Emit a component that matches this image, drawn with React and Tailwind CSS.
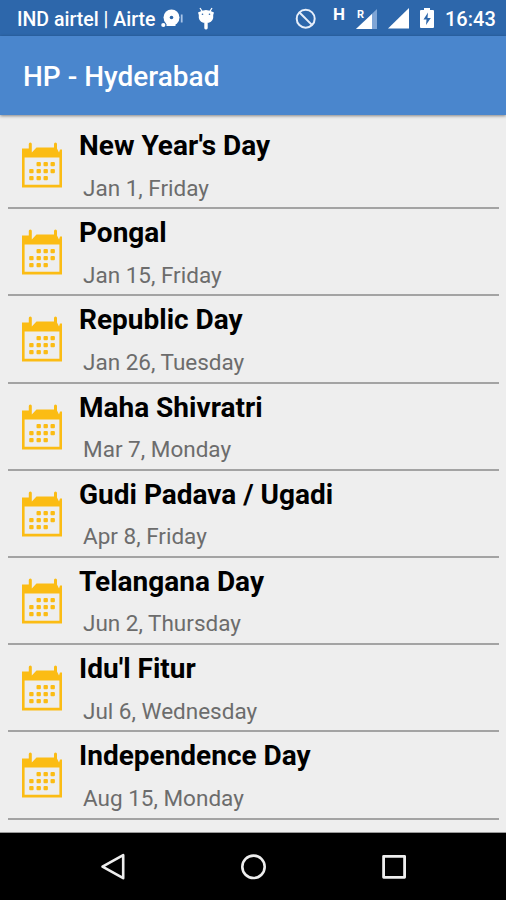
import React from 'react';

const holidays = [
    { name: "New Year's Day", date: 'Jan 1, Friday' },
    { name: 'Pongal', date: 'Jan 15, Friday' },
    { name: 'Republic Day', date: 'Jan 26, Tuesday' },
    { name: 'Maha Shivratri', date: 'Mar 7, Monday' },
    { name: 'Gudi Padava / Ugadi', date: 'Apr 8, Friday' },
    { name: 'Telangana Day', date: 'Jun 2, Thursday' },
    { name: "Idu'l Fitur", date: 'Jul 6, Wednesday' },
    { name: 'Independence Day', date: 'Aug 15, Monday' },
];

const CalendarIcon = () => (
    <svg className="shrink-0" width="40" height="46" viewBox="0 0 40 46" fill="#fbbc14">
        <path d="M0 6.5h6.8V2q0-1.5 1.5-1.5T9.8 2v8.5L14.5 5.5H32V2q0-1.5 1.5-1.5T35 2v4.5l2 4L38 7.5h2V45.5H0zM2.6 15.5v27.2h34.8V15.5z" fillRule="evenodd" />
        <g>
            <rect x="14.5" y="20" width="4.4" height="4.2" rx="1" />
            <rect x="21.5" y="20" width="4.4" height="4.2" rx="1" />
            <rect x="28.5" y="20" width="4.4" height="4.2" rx="1" />
            <rect x="7.2" y="27" width="4.4" height="4.2" rx="1" />
            <rect x="14.5" y="27" width="4.4" height="4.2" rx="1" />
            <rect x="21.5" y="27" width="4.4" height="4.2" rx="1" />
            <rect x="28.5" y="27" width="4.4" height="4.2" rx="1" />
            <rect x="7.2" y="34" width="4.4" height="4.2" rx="1" />
            <rect x="14.5" y="34" width="4.4" height="4.2" rx="1" />
            <rect x="21.5" y="34" width="4.4" height="4.2" rx="1" />
        </g>
    </svg>
);

const DiscIcon = () => (
    <svg width="24" height="20" viewBox="0 0 24 20" fill="#fff">
        <circle cx="10.5" cy="8.5" r="8" />
        <circle cx="10.5" cy="8.5" r="1.8" fill="#2d67ab" />
        <circle cx="2.3" cy="16" r="2.1" />
        <path d="M5.5 14h9v3h-9z" />
        <path d="M20.7 5.5v8" stroke="#a9c5e8" strokeWidth="1.8" />
    </svg>
);

const DroidIcon = () => (
    <svg width="18" height="24" viewBox="0 0 18 24" fill="#fff">
        <path d="M3 1l2.2 3.5M15 1l-2.2 3.5" stroke="#fff" strokeWidth="1.3" />
        <path d="M1 5.5Q5 3 9 3t8 2.5l-.8 2.5v3q-1 5-7.2 5t-7.2-5V8z" />
        <rect x="7.3" y="15" width="3.4" height="7.5" rx="1.4" />
        <circle cx="5.5" cy="7.3" r=".8" fill="#2d67ab" />
        <circle cx="12.5" cy="7.3" r=".8" fill="#2d67ab" />
    </svg>
);

const StatusBar = () => (
    <div className="flex h-9 items-start bg-[#2d67ab] text-white">
        <span className="ml-[17px] mt-[7px] w-[144px] whitespace-nowrap text-[19.5px] font-medium leading-[26px]">IND airtel | Airte</span>
        <div className="mt-[9px]"><DiscIcon /></div>
        <div className="ml-[12px] mt-[7px]"><DroidIcon /></div>
        <svg className="ml-[80px] mt-[8px]" width="22" height="22" viewBox="0 0 22 22" fill="none" stroke="#e6eefa" strokeWidth="2">
            <circle cx="10.7" cy="10.7" r="9" />
            <path d="M4.5 4.5l12.4 12.4" />
        </svg>
        <span className="ml-[16px] mt-[4px] w-[14px] text-[17px] font-bold leading-[20px]">H</span>
        <div className="ml-[9px] mt-[8px] flex">
            <span className="z-10 -mr-[8px] w-[8px] pl-px text-[11px] font-bold leading-[13px]">R</span>
            <svg width="22" height="22" viewBox="0 0 22 22">
                <path d="M21 1v20H0z" fill="#7fa5d6" />
                <path d="M16 6v15H0z" fill="#fff" />
            </svg>
        </div>
        <svg className="ml-[10px] mt-[8px]" width="21" height="21" viewBox="0 0 21 21">
            <path d="M21 0v20.5H0z" fill="#fff" />
        </svg>
        <svg className="ml-[11px] mt-[8px]" width="14" height="20" viewBox="0 0 14 20">
            <path d="M4 0h6v2h3q1 0 1 1v16q0 1-1 1H1q-1 0-1-1V3q0-1 1-1h3z" fill="#fff" />
            <path d="M8 4.5l-4.5 7h3L6 17l4.8-7H7.5z" fill="#2d67ab" />
        </svg>
        <span className="ml-[11px] mt-[6px] whitespace-nowrap text-[20px] font-medium leading-[26px]">16:43</span>
    </div>
);

const HolidayRow = ({ name, date }) => (
    <li className="flex h-[87.2px] border-b-[2.5px] border-[#a3a3a3] pl-[14px]">
        <div className="mt-[20px]"><CalendarIcon /></div>
        <div className="ml-[17px] whitespace-nowrap">
            <h2 className="mt-[7px] text-[28px] font-bold leading-[34px] text-black">{name}</h2>
            <p className="ml-[4px] mt-[10.5px] text-[22.5px] leading-[28px] text-[#6c6c6c]">{date}</p>
        </div>
    </li>
);

const NavigationBar = () => (
    <nav className="flex h-[67px] items-start justify-between bg-black pl-[100px] pr-[98px] pt-[20px]">
        <svg width="26" height="28" viewBox="0 0 26 28" fill="none" stroke="#eee" strokeWidth="2.6" strokeLinejoin="round">
            <path d="M23.2 2.2v23L2.5 13.7z" />
        </svg>
        <svg width="28" height="28" viewBox="0 0 28 28" fill="none" stroke="#eee" strokeWidth="2.6">
            <circle cx="14.5" cy="13.8" r="11.2" />
        </svg>
        <svg width="28" height="28" viewBox="0 0 28 28" fill="none" stroke="#eee" strokeWidth="2.8" strokeLinejoin="round">
            <rect x="3.6" y="3.3" width="21" height="21" />
        </svg>
    </nav>
);

export default function App() {
    return (
        <div className="flex h-[900px] w-[506px] flex-col overflow-hidden bg-[#eeeeee] font-[Roboto,sans-serif]">
            <StatusBar />
            <header className="z-10 flex h-[79px] shrink-0 items-center bg-[#4a86cd] pl-[23px] pt-[2px] shadow-[0_1px_3px_rgba(0,0,0,0.45)]">
                <h1 className="text-[28px] font-medium leading-8 text-white">HP - Hyderabad</h1>
            </header>
            <main className="h-[718px] shrink-0 border-b border-[#999] pl-2 pr-[7px] pt-[7px]">
                <ul>
                    {holidays.map((holiday) => (
                        <HolidayRow key={holiday.name} {...holiday} />
                    ))}
                </ul>
            </main>
            <NavigationBar />
        </div>
    );
}
